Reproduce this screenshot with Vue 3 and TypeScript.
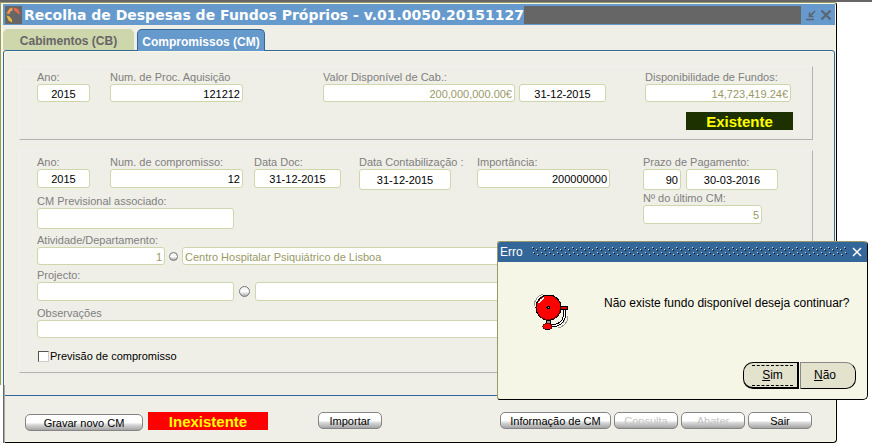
<script setup lang="ts">
import { ref } from 'vue'

const tabs = [
  { id: 'cb', label: 'Cabimentos (CB)' },
  { id: 'cm', label: 'Compromissos (CM)' },
]
const activeTab = ref('cm')

const acquisition = ref({
  year: '2015',
  process: '121212',
  available: '200,000,000.00€',
  date: '31-12-2015',
  funds: '14,723,419.24€',
})

const commitment = ref({
  year: '2015',
  number: '12',
  docDate: '31-12-2015',
  postingDate: '31-12-2015',
  amount: '200000000',
  termDays: '90',
  dueDate: '30-03-2016',
  forecast: '',
  lastNumber: '5',
  activity: '1',
  activityName: 'Centro Hospitalar Psiquiátrico de Lisboa',
  project: '',
  projectName: '',
  notes: '',
  isForecast: false,
})

const errorOpen = ref(true)
</script>

<template>
  <div class="desktop">
    <main class="window">
      <header class="titlebar">
        <svg class="logo" viewBox="0 0 17 18" aria-hidden="true">
          <rect width="17" height="18" fill="#666" />
          <path d="M1.5 7.5L4.5 2.5 7.5 1.5V4.5L5 6 4.5 8z" fill="#f09a50" />
          <path d="M9 1.5L13 3 15.5 8.5 13 7.5 9 4.5z" fill="#e8694a" />
          <path d="M1.5 9.5L4.5 10.5 7 13.5V16.5L3.5 14.5z" fill="#ecb63c" />
        </svg>
        <h1>Recolha de Despesas de Fundos Próprios - v.01.0050.20151127</h1>
        <span class="mask"></span>
        <button class="win-btn" type="button" aria-label="Minimizar">
          <svg viewBox="0 0 12 12"><path d="M1 10.5h8M10 2L5 7M4.5 3.5v4h4" fill="none" stroke="#5c6470" stroke-width="1.6" /></svg>
        </button>
        <button class="win-btn" type="button" aria-label="Fechar">
          <svg viewBox="0 0 12 12"><path d="M1.5 1.5l9 9M10.5 1.5l-9 9" fill="none" stroke="#5c6470" stroke-width="2.2" /></svg>
        </button>
      </header>

      <nav class="tabs">
        <button
          v-for="tab in tabs"
          :key="tab.id"
          type="button"
          class="tab"
          :class="{ active: tab.id === activeTab }"
          @click="activeTab = tab.id"
        >{{ tab.label }}</button>
      </nav>

      <section class="panel">
        <div class="group first">
          <div class="row">
            <div class="field year">
              <label for="a-year">Ano:</label>
              <input id="a-year" v-model="acquisition.year" class="center" />
            </div>
            <div class="field wide after-year">
              <label for="a-proc">Num. de Proc. Aquisição</label>
              <input id="a-proc" v-model="acquisition.process" class="right" />
            </div>
            <div class="field value push">
              <label for="a-value">Valor Disponível de Cab.:</label>
              <input id="a-value" v-model="acquisition.available" class="right" disabled />
            </div>
            <div class="field date bare">
              <input v-model="acquisition.date" class="center" aria-label="Data de Cab." />
            </div>
            <div class="field funds">
              <label for="a-funds">Disponibilidade de Fundos:</label>
              <input id="a-funds" v-model="acquisition.funds" class="right" disabled />
            </div>
          </div>
          <output class="badge ok">Existente</output>
        </div>

        <div class="group second">
          <div class="split">
            <div class="left">
              <div class="row">
                <div class="field year">
                  <label for="c-year">Ano:</label>
                  <input id="c-year" v-model="commitment.year" class="center mid" />
                </div>
                <div class="field wide after-year">
                  <label for="c-num">Num. de compromisso:</label>
                  <input id="c-num" v-model="commitment.number" class="right mid" />
                </div>
                <div class="field date doc">
                  <label for="c-doc">Data Doc:</label>
                  <input id="c-doc" v-model="commitment.docDate" class="center mid" />
                </div>
                <div class="field long-date posting">
                  <label for="c-post">Data Contabilização :</label>
                  <input id="c-post" v-model="commitment.postingDate" class="center tall" />
                </div>
                <div class="field wide amount">
                  <label for="c-amount">Importância:</label>
                  <input id="c-amount" v-model="commitment.amount" class="right mid" />
                </div>
              </div>
              <div class="field code forecast">
                <label for="c-fore">CM Previsional associado:</label>
                <input id="c-fore" v-model="commitment.forecast" class="tall" />
              </div>
            </div>
            <div class="side">
              <label for="c-term">Prazo de Pagamento:</label>
              <div class="term">
                <input id="c-term" v-model="commitment.termDays" class="right tall days" />
                <input v-model="commitment.dueDate" class="center tall due" aria-label="Data de Pagamento" />
              </div>
              <label for="c-last">Nº do último CM:</label>
              <input id="c-last" v-model="commitment.lastNumber" class="right mid last" disabled />
            </div>
          </div>

          <div class="lookup activity">
            <label for="c-act">Atividade/Departamento:</label>
            <div class="lookup-row">
              <input id="c-act" v-model="commitment.activity" class="right act-code" disabled />
              <button type="button" class="ball" aria-label="Lista de atividades"></button>
              <input v-model="commitment.activityName" class="grow" aria-label="Nome da atividade" disabled />
            </div>
          </div>

          <div class="lookup project">
            <label for="c-proj">Projecto:</label>
            <div class="lookup-row loose">
              <input id="c-proj" v-model="commitment.project" class="mid code" />
              <button type="button" class="ball" aria-label="Lista de projectos"></button>
              <input v-model="commitment.projectName" class="mid grow" aria-label="Nome do projecto" />
            </div>
          </div>

          <div class="lookup notes">
            <label for="c-notes">Observações</label>
            <input id="c-notes" v-model="commitment.notes" />
          </div>

          <label class="check">
            <input v-model="commitment.isForecast" type="checkbox" />
            Previsão de compromisso
          </label>
        </div>
      </section>

      <footer class="actions">
        <button type="button" class="action save">Gravar novo CM</button>
        <output class="badge missing">Inexistente</output>
        <button type="button" class="action import">Importar</button>
        <div class="action-set">
          <button type="button" class="action info">Informação de CM</button>
          <button type="button" class="action" disabled>Consulta</button>
          <button type="button" class="action" disabled>Abater</button>
          <button type="button" class="action">Sair</button>
        </div>
      </footer>
    </main>

    <div v-if="errorOpen" class="dialog" role="alertdialog" aria-labelledby="dlg-title" aria-describedby="dlg-text">
      <header class="dlg-bar">
        <h2 id="dlg-title">Erro</h2>
        <svg class="grip" aria-hidden="true">
          <defs>
            <pattern id="dots" width="8" height="10" patternUnits="userSpaceOnUse">
              <path d="M0 0h1v1h-1zM4 2h1v1h-1zM1 5h1v1h-1zM5 7h1v1h-1z" fill="#e4e4c4" />
              <path d="M1 1h1v1h-1zM5 3h1v1h-1zM2 6h1v1h-1zM6 8h1v1h-1z" fill="#000" />
            </pattern>
          </defs>
          <rect width="100%" height="100%" fill="url(#dots)" />
        </svg>
        <button type="button" class="dlg-close" aria-label="Fechar" @click="errorOpen = false">
          <svg viewBox="0 0 10 10"><path d="M1 1l8 8M9 1l-8 8" fill="none" stroke="#fff" stroke-width="1.5" /></svg>
        </button>
      </header>
      <div class="dlg-body">
        <svg class="bell" viewBox="8 8 38 38" shape-rendering="crispEdges" aria-hidden="true">
          <path d="M9 21a14 14 0 0 1 9-12M12 20a11 11 0 0 1 6-9" fill="none" stroke="#999" />
          <path d="M43 31a12 12 0 0 1-10 12M40 33a9 9 0 0 1-6 7" fill="none" stroke="#999" />
          <path d="M39 25c2 9-2 15-12 16" fill="none" stroke="#000" stroke-width="3" />
          <path d="M39 25c2 9-2 15-12 16" fill="none" stroke="#fff" stroke-width="1" />
          <path d="M21 35h4v4h-4z" fill="#999" stroke="#000" />
          <path d="M35 21h7v3h-7z" fill="#e00000" stroke="#000" />
          <circle cx="23.5" cy="22.5" r="12.5" fill="#f00" stroke="#000" />
          <path d="M14 30a12 12 0 0 0 21-5" fill="none" stroke="#900" />
          <path d="M14 18a10 10 0 0 1 5-5" fill="none" stroke="#fff" stroke-width="1.5" />
          <circle cx="23.5" cy="22.5" r="1.5" fill="#d88" stroke="#000" />
          <ellipse cx="22.5" cy="41.5" rx="4.5" ry="3" fill="#f00" stroke="#700" />
          <path d="M20 44.5h5" stroke="#000" />
        </svg>
        <p id="dlg-text">Não existe fundo disponível deseja continuar?</p>
      </div>
      <div class="dlg-actions">
        <button type="button" class="choice yes" @click="errorOpen = false"><span><u>S</u>im</span></button>
        <button type="button" class="choice no" @click="errorOpen = false"><span><u>N</u>ão</span></button>
      </div>
    </div>
  </div>
</template>

<style>
body {
  background: #fff;
}
</style>

<style scoped>
.desktop,
.desktop * {
  box-sizing: border-box;
}
.desktop {
  position: relative;
  border-top: 2px solid #666;
  font: 11px/13px "Liberation Sans", Arial, sans-serif;
  color: #808080;
}
button,
input {
  font: inherit;
  margin: 0;
}
h1,
h2,
p {
  margin: 0;
}

.window {
  position: relative;
  margin-right: 35px;
  padding-left: 2px;
  border: 1px solid #000;
  border-top-color: #999966;
  border-left-color: #999966;
  border-radius: 0 3px 4px 0;
  background: #efefe7;
  box-shadow: inset -1px -1px #f8f8e4, inset 2px 1px #f8f8e4;
}
.window::after {
  content: "";
  position: absolute;
  left: -1px;
  bottom: -5px;
  width: 5px;
  height: 62px;
  background: linear-gradient(90deg, #fff 3px, #666 3px, #666 4px, #aaa 4px);
}

.titlebar {
  display: flex;
  align-items: center;
  height: 21px;
  margin: 1px 1px 0 0;
  padding: 0 2px;
  background: #6699cc;
}
.logo {
  width: 17px;
  height: 18px;
}
h1 {
  margin-left: 2px;
  font: bold 14px/20px "DejaVu Sans", Verdana, sans-serif;
  color: #fff;
  white-space: nowrap;
}
.mask {
  flex: 1;
  height: 18px;
  margin-right: 2px;
  background: #666;
}
.win-btn,
.dlg-close {
  display: flex;
  padding: 0;
  border: 0;
  background: none;
}
.win-btn {
  width: 12px;
  margin-left: 2px;
  margin-right: 1px;
}
.win-btn svg {
  width: 12px;
  height: 12px;
}

.tabs {
  display: flex;
  gap: 3px;
  margin-top: 4px;
}
.tab {
  height: 22px;
  width: 131px;
  margin-bottom: -1px;
  padding: 3px 0 0;
  border: 1px solid #ced6ac;
  border-bottom: 0;
  border-radius: 5px 5px 0 0;
  background: #ced6ac;
  color: #666;
  font-weight: bold;
  font-size: 12px;
}
.tab:not(.active) {
  height: 21px;
}
.tab.active {
  position: relative;
  width: 128px;
  border-color: #336699;
  background: #6699cc;
  color: #fff;
}

.panel {
  margin-right: 1px;
  padding: 15px 21px 22px 15px;
  border: 1px solid #336699;
  border-radius: 3px 3px 2px 2px;
  box-shadow: inset 1px 1px #f8f8e4;
}
.group {
  border: 1px solid #f2f2f4;
  border-right-color: #b4b4b4;
  border-bottom-color: #b4b4b4;
}
.first {
  padding: 4px 19px 9px 17px;
}
.second {
  margin-top: 10px;
  padding: 5px 20px 9px 17px;
}
.row,
.split,
.term,
.lookup-row {
  display: flex;
}
.row {
  align-items: flex-start;
}
.first .row {
  padding-right: 2px;
}
.field,
.side,
.lookup {
  display: flex;
  flex-direction: column;
}
label {
  white-space: nowrap;
}
.field input {
  width: 100%;
}
input {
  height: 18px;
  min-width: 0;
  padding: 1px 2px 0;
  border: 1px solid #ced6ac;
  border-radius: 3px;
  background: #fff;
  color: #000;
}
input:disabled {
  color: #999966;
}
.mid {
  height: 19px;
}
.tall {
  height: 21px;
}
.center {
  text-align: center;
}
.right {
  text-align: right;
}
.year {
  width: 53px;
}
.wide {
  width: 133px;
}
.after-year {
  margin-left: 20px;
}
.value {
  width: 192px;
}
.push {
  margin-left: auto;
}
.date {
  width: 87px;
}
.bare {
  margin-left: 4px;
  padding-top: 13px;
}
.funds {
  width: 146px;
  margin-left: 39px;
}
.doc {
  margin-left: 11px;
}
.long-date {
  width: 92px;
}
.posting {
  margin-left: 18px;
}
.amount {
  margin-left: 26px;
}
.code {
  width: 197px;
}
.forecast {
  margin-top: 5px;
}
.side {
  width: 149px;
  margin-left: auto;
}
.term {
  gap: 5px;
  margin-bottom: 2px;
}
.days {
  width: 38px;
}
.due {
  width: 92px;
}
.last {
  width: 119px;
}
.activity {
  margin-top: 5px;
}
.project {
  margin-top: 4px;
}
.notes {
  margin-top: 6px;
}
.lookup-row {
  align-items: center;
  gap: 4px;
}
.act-code {
  width: 128px;
}
.loose {
  gap: 5px;
}
.grow {
  flex: 1;
}
.ball {
  width: 9px;
  height: 9px;
  padding: 0;
  border: 1px solid #777;
  border-radius: 50%;
  background: linear-gradient(#eee, #fff 50%, #aaa);
}
.loose .ball {
  width: 11px;
  height: 11px;
}
.check {
  display: flex;
  align-items: center;
  gap: 1px;
  margin: 12px 0 0 1px;
  color: #000;
}
.check input {
  appearance: none;
  width: 11px;
  height: 11px;
  padding: 0;
  border: 1px solid #ccc;
  border-top-color: #555;
  border-left-color: #555;
  border-radius: 0;
}
.check input:checked {
  background: #369;
}

.badge {
  display: block;
  height: 18px;
  font-weight: bold;
  font-size: 15px;
  line-height: 19px;
  text-align: center;
  color: #ff0;
}
.ok {
  width: 107px;
  margin: 10px 0 0 auto;
  background: #1c3000;
}
.missing {
  width: 120px;
  margin-left: 5px;
  background: #f00;
}

.actions {
  display: flex;
  align-items: flex-start;
  padding: 16px 24px 11px 22px;
}
.action {
  width: 64px;
  height: 17px;
  padding: 1px 0 0;
  border: 1px solid #858585;
  border-radius: 5px;
  background: linear-gradient(#fff 50%, #d8d8d8 65%, #a4a4a4);
  color: #000;
  line-height: 14px;
  white-space: nowrap;
}
.action:disabled {
  color: #c4c4c4;
}
.save {
  width: 118px;
  margin-top: 2px;
}
.import {
  margin-left: 50px;
}
.info {
  width: 111px;
}
.action-set {
  display: flex;
  gap: 3px;
  margin-left: auto;
}

.dialog {
  position: absolute;
  left: 497px;
  top: 239px;
  width: 371px;
  border: 1px solid #999966;
  border-right-color: #000;
  border-bottom-color: #000;
  border-radius: 3px 4px 5px 3px;
  background: #f6f6e6;
  color: #000;
  font-size: 12px;
  overflow: hidden;
}
.dlg-bar {
  display: flex;
  align-items: center;
  height: 20px;
  padding: 0 5px 0 2px;
  background: #336699;
}
h2 {
  font-weight: normal;
  font-size: 12px;
  color: #fff;
}
.grip {
  flex: 1;
  height: 10px;
  margin: 0 5px 0 9px;
}
.dlg-close svg {
  width: 10px;
  height: 10px;
}
.dlg-body {
  display: flex;
  align-items: flex-start;
  padding: 31px 0 0 35px;
}
.bell {
  width: 38px;
  height: 38px;
}
.dlg-body p {
  margin: 3px 0 0 33px;
  line-height: 15px;
  white-space: nowrap;
}
.dlg-actions {
  display: flex;
  justify-content: flex-end;
  gap: 1px;
  padding: 31px 11px 10px;
}
.choice {
  width: 56px;
  height: 27px;
  padding: 3px 4px;
  background: #e3e3cd;
  color: #000;
}
.choice span {
  display: block;
  line-height: 19px;
}
.yes {
  border: 1px solid #000;
  border-width: 1px 2px 2px 1px;
  border-radius: 10px 0 0 10px;
  padding: 2px 4px 1px 8px;
}
.yes span {
  border-top: 1px dashed #000;
  border-bottom: 1px dashed #000;
}
.no {
  border: 1px solid #000;
  border-top-color: #888;
  border-left-color: #888;
  border-radius: 0 10px 10px 0;
  padding-right: 10px;
}
</style>
